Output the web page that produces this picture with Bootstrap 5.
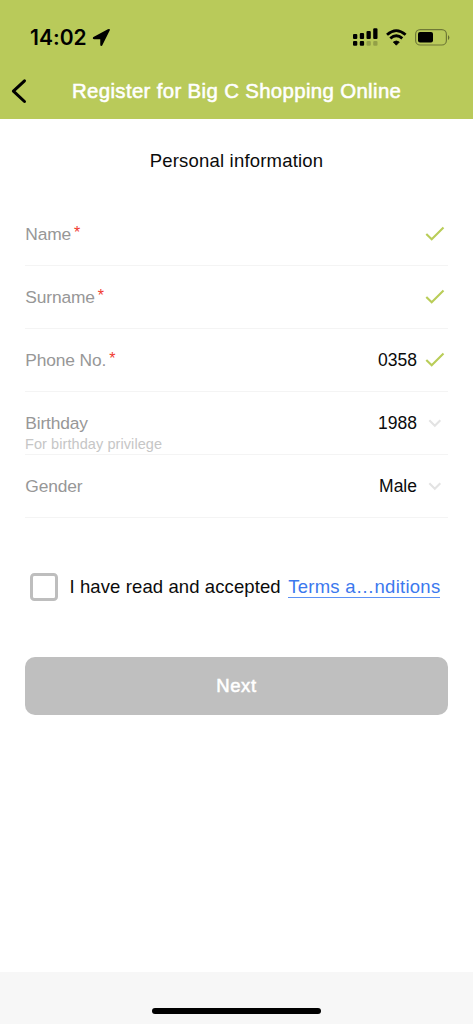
<!DOCTYPE html>
<html lang="en">
<head>
<meta charset="utf-8">
<meta name="viewport" content="width=device-width, initial-scale=1">
<title>Register for Big C Shopping Online</title>
<link href="https://cdn.jsdelivr.net/npm/bootstrap@5.3.0/dist/css/bootstrap.min.css" rel="stylesheet">
<style>
body { font-family: "Liberation Sans", Arial, sans-serif; font-size: 17.5px; line-height: 24px; color: #0b0b0b; background: #fff; }
.screen { height: 1024px; }
.top-area { background: #b9ca5a; height: 118.5px; }
.status-bar { height: 63px; padding: 25px 23px 0 30px; color: #000; }
.clock { font: 600 21px/24px Inter, sans-serif; letter-spacing: .05px; margin-top: 1px; }
.title-bar { height: 55px; padding-left: 11px; }
.page-title { font-size: 20.4px; font-weight: 400; -webkit-text-stroke: .55px #fff; margin: 1px 0 0 44px; white-space: nowrap; letter-spacing: .35px; }
.section-title { font-size: 18.5px; line-height: 27px; margin: 28px 0 29px; letter-spacing: .2px; }
.field { height: 63.1px; border-bottom: 1.6px solid #f4f4f4; color: #979797; padding-top: 19.5px; }
.fields { padding: 0 25px; }
.field-name { font-size: 17.4px; padding-left: .3px; letter-spacing: -.15px; }
.req { color: #f03a2e; font-size: 16px; line-height: 22px; margin-left: 3px; }
.hint { font-size: 14.5px; line-height: 19px; color: #c6c6c6; letter-spacing: .08px; }
.value { color: #0b0b0b; margin-right: 8px; }
.field svg { margin-right: 1px; }
.agree { margin-top: 55px; padding-left: 30px; height: 29px; }
.agree-box { width: 28px; height: 28px; border: 3px solid #bebebe; border-radius: 3px; background: #fff; margin: 0; }
.agree-text { font-size: 18.5px; margin-left: 11.5px; white-space: nowrap; letter-spacing: .1px; }
.terms { font-size: 18.5px; line-height: 20px; color: #3c78ee; border-bottom: 1.3px solid #5d92f5; margin: 0 0 0 7.5px; white-space: nowrap; text-decoration: none; letter-spacing: .26px; }
.btn-next, .btn-next:disabled { height: 58.5px; margin: 55px 25px 0; background: #bfbfbf; border: 0; border-radius: 10px; color: #fff; opacity: 1; font-size: 18.5px; font-weight: 400; -webkit-text-stroke: .55px #fff; letter-spacing: .6px; }
.home-area { height: 52px; background: #f7f7f7; padding-bottom: 10px; }
.home-bar { width: 169px; height: 6.5px; background: #000; }
</style>
</head>
<body>
<div class="screen d-flex flex-column">
  <header class="top-area flex-shrink-0">
    <div class="status-bar d-flex justify-content-between align-items-start">
      <div class="d-flex align-items-center">
        <span class="clock">14:02</span>
        <svg class="ms-1" width="19" height="18" viewBox="-1 0 19 18"><path d="M17 1.2 9.9 15.5Q9 17 9 15.2V9.4H2.4Q.8 9.3 2.3 8.5L16.2 1Q17.6.5 17 1.2Z" fill="#000" stroke="#000" stroke-width="1.5" stroke-linejoin="round"/></svg>
      </div>
      <svg width="98" height="24" viewBox="352 25 98 24">
        <g fill="#000">
          <rect x="353" y="34" width="4.3" height="5" rx="1.1"/><rect x="359.8" y="33" width="4.3" height="6" rx="1.1"/><rect x="366.5" y="31" width="4.3" height="8" rx="1.1"/><rect x="373.2" y="28.3" width="4.3" height="10.7" rx="1.1"/>
          <rect x="353" y="41" width="4.3" height="4.8" rx="1.1"/><rect x="359.8" y="41" width="4.3" height="4.8" rx="1.1"/>
          <g opacity=".2"><rect x="366.5" y="41" width="4.3" height="4.8" rx="1.1"/><rect x="373.2" y="41" width="4.3" height="4.8" rx="1.1"/></g>
          <path d="M393.3 42.1Q396.3 39.8 399.3 42.1L396.3 45.2Z" stroke="#000" stroke-width=".8" stroke-linejoin="round"/>
          <rect x="418" y="32" width="15" height="10.6" rx="2"/>
        </g>
        <g fill="none" stroke="#000" stroke-width="2.8"><path d="M387 34.8Q396.3 26.5 405.6 34.8"/><path d="M390.3 38.4Q396.3 33.2 402.3 38.4"/></g>
        <rect x="415.6" y="29.6" width="30.8" height="15.4" rx="4.6" fill="none" stroke="#000" stroke-opacity=".4" stroke-width="1.2"/>
        <path d="M448 35V40Q449.4 39 449.4 37.5T448 35Z" fill="#000" fill-opacity=".45"/>
      </svg>
    </div>
    <div class="title-bar d-flex align-items-center">
      <svg class="flex-shrink-0" width="17" height="26" viewBox="0 0 17 26"><path d="M13.5 2.8 2.4 13.2 13.5 23.5" fill="none" stroke="#000" stroke-width="3" stroke-linecap="round" stroke-linejoin="round"/></svg>
      <h1 class="page-title text-white">Register for Big C Shopping Online</h1>
    </div>
  </header>
  <main class="flex-grow-1 d-flex flex-column">
    <h2 class="section-title text-center fw-normal">Personal information</h2>
    <div class="fields">
      <div class="field d-flex justify-content-between align-items-start">
        <div class="d-flex"><span class="field-name">Name</span><span class="req">*</span></div>
        <svg class="tick" width="22" height="24" viewBox="0 0 22 24"><path d="M1.3 12 6.7 17.3 18.5 5.6" fill="none" stroke="#b9cd58" stroke-width="2.1"/></svg>
      </div>
      <div class="field d-flex justify-content-between align-items-start">
        <div class="d-flex"><span class="field-name">Surname</span><span class="req">*</span></div>
        <svg class="tick" width="22" height="24" viewBox="0 0 22 24"><path d="M1.3 12 6.7 17.3 18.5 5.6" fill="none" stroke="#b9cd58" stroke-width="2.1"/></svg>
      </div>
      <div class="field d-flex justify-content-between align-items-start">
        <div class="d-flex"><span class="field-name">Phone No.</span><span class="req">*</span></div>
        <div class="d-flex"><span class="value">0358</span><svg class="tick" width="22" height="24" viewBox="0 0 22 24"><path d="M1.3 12 6.7 17.3 18.5 5.6" fill="none" stroke="#b9cd58" stroke-width="2.1"/></svg></div>
      </div>
      <div class="field d-flex justify-content-between align-items-start">
        <div><div class="field-name">Birthday</div><div class="hint">For birthday privilege</div></div>
        <div class="d-flex"><span class="value">1988</span><svg width="22" height="24" viewBox="0 0 22 24"><path d="M4.3 9.3 9.8 14.8 15.3 9.3" fill="none" stroke="#e3e3e3" stroke-width="2.1"/></svg></div>
      </div>
      <div class="field d-flex justify-content-between align-items-start">
        <div class="field-name">Gender</div>
        <div class="d-flex"><span class="value">Male</span><svg width="22" height="24" viewBox="0 0 22 24"><path d="M4.3 9.3 9.8 14.8 15.3 9.3" fill="none" stroke="#e3e3e3" stroke-width="2.1"/></svg></div>
      </div>
    </div>
    <div class="agree d-flex align-items-center">
      <input class="form-check-input agree-box flex-shrink-0" type="checkbox" id="agree">
      <label class="agree-text" for="agree">I have read and accepted</label>
      <a class="terms" href="#">Terms a…nditions</a>
    </div>
    <button class="btn btn-next" type="button" disabled>Next</button>
  </main>
  <footer class="home-area d-flex justify-content-center align-items-end flex-shrink-0"><div class="home-bar rounded-pill"></div></footer>
</div>
<script src="https://cdn.jsdelivr.net/npm/bootstrap@5.3.0/dist/js/bootstrap.bundle.min.js"></script>
</body>
</html>
